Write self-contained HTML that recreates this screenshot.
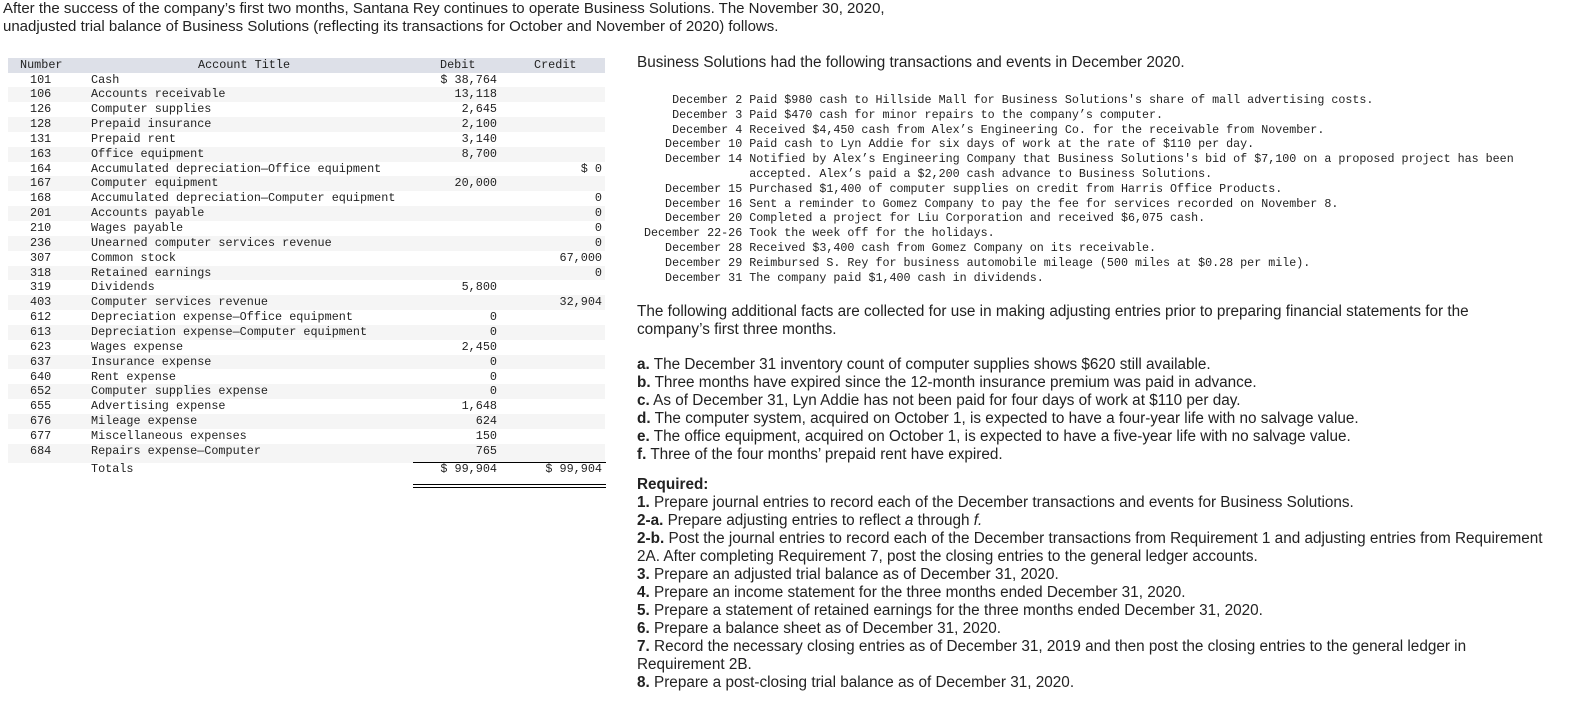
<!DOCTYPE html>
<html><head><meta charset="utf-8"><style>
body{margin:0;background:#fff;width:1593px;height:710px;position:relative;overflow:hidden;color:#222;font-family:"Liberation Sans",sans-serif;}
.s{position:absolute;font-size:15.3px;line-height:18px;white-space:nowrap;}
.m{font-family:"Liberation Mono",monospace;font-size:11.8px;color:#222;}
.row{position:absolute;left:8px;width:597px;height:14.85px;}
.row span{position:absolute;top:0;line-height:14.85px;white-space:pre;}
.n{left:22px;}.t{left:83px;}.d{right:108px;}.c{right:3px;}
.tx{position:absolute;left:637px;white-space:pre;line-height:14.8px;font-size:11.7px;}
b{font-weight:bold;}
</style></head><body>
<div class="s" style="left:3px;top:0px;font-size:15px">After the success of the company’s first two months, Santana Rey continues to operate Business Solutions. The November 30, 2020,</div>
<div class="s" style="left:3px;top:18px;font-size:15px">unadjusted trial balance of Business Solutions (reflecting its transactions for October and November of 2020) follows.</div>

<div class="m" style="position:absolute;left:0;top:0;">
<div class="row" style="top:58px;background:#dde0e8;height:14.5px"><span style="left:12px">Number</span><span style="left:190px">Account Title</span><span style="left:432px">Debit</span><span style="left:526px">Credit</span></div>
<div class="row" style="top:72.5px"><span class="n">101</span><span class="t">Cash</span><span class="d">$ 38,764</span></div>
<div class="row" style="top:87.35px;background:#f5f5f5"><span class="n">106</span><span class="t">Accounts receivable</span><span class="d">13,118</span></div>
<div class="row" style="top:102.2px"><span class="n">126</span><span class="t">Computer supplies</span><span class="d">2,645</span></div>
<div class="row" style="top:117.05px;background:#f5f5f5"><span class="n">128</span><span class="t">Prepaid insurance</span><span class="d">2,100</span></div>
<div class="row" style="top:131.9px"><span class="n">131</span><span class="t">Prepaid rent</span><span class="d">3,140</span></div>
<div class="row" style="top:146.75px;background:#f5f5f5"><span class="n">163</span><span class="t">Office equipment</span><span class="d">8,700</span></div>
<div class="row" style="top:161.6px"><span class="n">164</span><span class="t">Accumulated depreciation—Office equipment</span><span class="c">$ 0</span></div>
<div class="row" style="top:176.45px;background:#f5f5f5"><span class="n">167</span><span class="t">Computer equipment</span><span class="d">20,000</span></div>
<div class="row" style="top:191.3px"><span class="n">168</span><span class="t">Accumulated depreciation—Computer equipment</span><span class="c">0</span></div>
<div class="row" style="top:206.15px;background:#f5f5f5"><span class="n">201</span><span class="t">Accounts payable</span><span class="c">0</span></div>
<div class="row" style="top:221px"><span class="n">210</span><span class="t">Wages payable</span><span class="c">0</span></div>
<div class="row" style="top:235.85px;background:#f5f5f5"><span class="n">236</span><span class="t">Unearned computer services revenue</span><span class="c">0</span></div>
<div class="row" style="top:250.7px"><span class="n">307</span><span class="t">Common stock</span><span class="c">67,000</span></div>
<div class="row" style="top:265.55px;background:#f5f5f5"><span class="n">318</span><span class="t">Retained earnings</span><span class="c">0</span></div>
<div class="row" style="top:280.4px"><span class="n">319</span><span class="t">Dividends</span><span class="d">5,800</span></div>
<div class="row" style="top:295.25px;background:#f5f5f5"><span class="n">403</span><span class="t">Computer services revenue</span><span class="c">32,904</span></div>
<div class="row" style="top:310.1px"><span class="n">612</span><span class="t">Depreciation expense—Office equipment</span><span class="d">0</span></div>
<div class="row" style="top:324.95px;background:#f5f5f5"><span class="n">613</span><span class="t">Depreciation expense—Computer equipment</span><span class="d">0</span></div>
<div class="row" style="top:339.8px"><span class="n">623</span><span class="t">Wages expense</span><span class="d">2,450</span></div>
<div class="row" style="top:354.65px;background:#f5f5f5"><span class="n">637</span><span class="t">Insurance expense</span><span class="d">0</span></div>
<div class="row" style="top:369.5px"><span class="n">640</span><span class="t">Rent expense</span><span class="d">0</span></div>
<div class="row" style="top:384.35px;background:#f5f5f5"><span class="n">652</span><span class="t">Computer supplies expense</span><span class="d">0</span></div>
<div class="row" style="top:399.2px"><span class="n">655</span><span class="t">Advertising expense</span><span class="d">1,648</span></div>
<div class="row" style="top:414.05px;background:#f5f5f5"><span class="n">676</span><span class="t">Mileage expense</span><span class="d">624</span></div>
<div class="row" style="top:428.9px"><span class="n">677</span><span class="t">Miscellaneous expenses</span><span class="d">150</span></div>
<div class="row" style="top:443.75px;background:#f5f5f5;height:19px"><span class="n">684</span><span class="t">Repairs expense—Computer</span><span class="d">765</span></div>
<div class="row" style="top:462px;height:22px"><span class="t" style="top:0;line-height:14.85px">Totals</span><span class="d">$ 99,904</span><span class="c">$ 99,904</span></div>
</div>
<div style="position:absolute;left:413px;top:462px;width:193px;height:1px;background:#000"></div>
<div style="position:absolute;left:413px;top:484px;width:193px;height:1px;background:#000"></div>
<div style="position:absolute;left:413px;top:487px;width:193px;height:1px;background:#000"></div>

<div class="s" style="left:637px;top:54px">Business Solutions had the following transactions and events in December 2020.</div>
<div class="m">
<div class="tx" style="top:93px">     December 2 Paid $980 cash to Hillside Mall for Business Solutions's share of mall advertising costs.
     December 3 Paid $470 cash for minor repairs to the company’s computer.
     December 4 Received $4,450 cash from Alex’s Engineering Co. for the receivable from November.
    December 10 Paid cash to Lyn Addie for six days of work at the rate of $110 per day.
    December 14 Notified by Alex’s Engineering Company that Business Solutions's bid of $7,100 on a proposed project has been
                accepted. Alex’s paid a $2,200 cash advance to Business Solutions.
    December 15 Purchased $1,400 of computer supplies on credit from Harris Office Products.
    December 16 Sent a reminder to Gomez Company to pay the fee for services recorded on November 8.
    December 20 Completed a project for Liu Corporation and received $6,075 cash.
 December 22-26 Took the week off for the holidays.
    December 28 Received $3,400 cash from Gomez Company on its receivable.
    December 29 Reimbursed S. Rey for business automobile mileage (500 miles at $0.28 per mile).
    December 31 The company paid $1,400 cash in dividends.</div>
</div>

<div class="s" style="left:637px;top:303px">The following additional facts are collected for use in making adjusting entries prior to preparing financial statements for the</div>
<div class="s" style="left:637px;top:321px">company’s first three months.</div>
<div class="s" style="left:637px;top:356px"><b>a.</b> The December 31 inventory count of computer supplies shows $620 still available.</div>
<div class="s" style="left:637px;top:374px"><b>b.</b> Three months have expired since the 12-month insurance premium was paid in advance.</div>
<div class="s" style="left:637px;top:392px"><b>c.</b> As of December 31, Lyn Addie has not been paid for four days of work at $110 per day.</div>
<div class="s" style="left:637px;top:410px"><b>d.</b> The computer system, acquired on October 1, is expected to have a four-year life with no salvage value.</div>
<div class="s" style="left:637px;top:428px"><b>e.</b> The office equipment, acquired on October 1, is expected to have a five-year life with no salvage value.</div>
<div class="s" style="left:637px;top:446px"><b>f.</b> Three of the four months’ prepaid rent have expired.</div>

<div class="s" style="left:637px;top:476px"><b>Required:</b></div>
<div class="s" style="left:637px;top:494px"><b>1.</b> Prepare journal entries to record each of the December transactions and events for Business Solutions.</div>
<div class="s" style="left:637px;top:512px"><b>2-a.</b> Prepare adjusting entries to reflect <i>a</i> through <i>f.</i></div>
<div class="s" style="left:637px;top:530px"><b>2-b.</b> Post the journal entries to record each of the December transactions from Requirement 1 and adjusting entries from Requirement</div>
<div class="s" style="left:637px;top:548px">2A. After completing Requirement 7, post the closing entries to the general ledger accounts.</div>
<div class="s" style="left:637px;top:566px"><b>3.</b> Prepare an adjusted trial balance as of December 31, 2020.</div>
<div class="s" style="left:637px;top:584px"><b>4.</b> Prepare an income statement for the three months ended December 31, 2020.</div>
<div class="s" style="left:637px;top:602px"><b>5.</b> Prepare a statement of retained earnings for the three months ended December 31, 2020.</div>
<div class="s" style="left:637px;top:620px"><b>6.</b> Prepare a balance sheet as of December 31, 2020.</div>
<div class="s" style="left:637px;top:638px"><b>7.</b> Record the necessary closing entries as of December 31, 2019 and then post the closing entries to the general ledger in</div>
<div class="s" style="left:637px;top:656px">Requirement 2B.</div>
<div class="s" style="left:637px;top:674px"><b>8.</b> Prepare a post-closing trial balance as of December 31, 2020.</div>
</body></html>
